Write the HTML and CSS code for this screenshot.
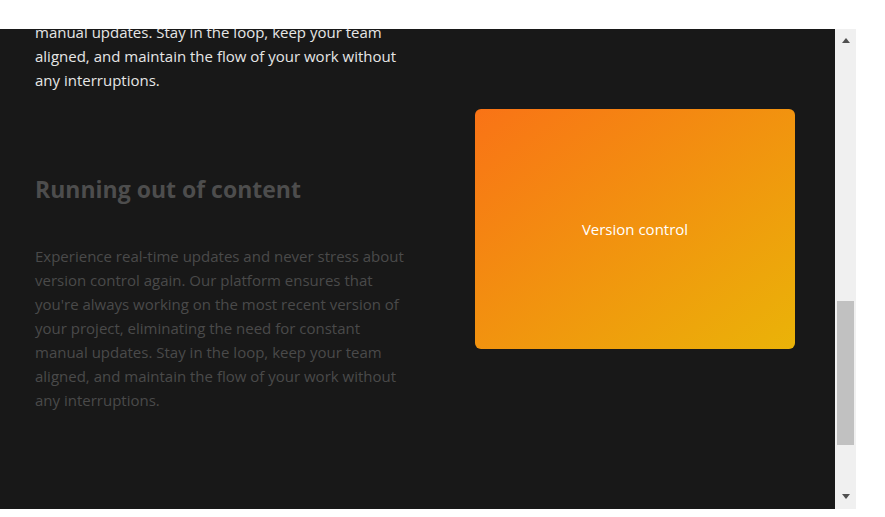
FILE: index.html
```html
<!DOCTYPE html>
<html lang="en">
<head>
<meta charset="utf-8">
<title>Features</title>
<link rel="stylesheet" href="styles.css">
</head>
<body>
<div class="frame">
  <div class="viewport">
    <div class="text-col">
      <section class="feature is-active">
        <h2 class="feature-title">Real-time updates</h2>
        <p class="feature-text">Experience real-time updates and never stress about version control again. Our platform ensures that you're always working on the most recent version of your project, eliminating the need for constant manual updates. Stay in the loop, keep your team aligned, and maintain the flow of your work without any interruptions.</p>
      </section>
      <section class="feature">
        <h2 class="feature-title">Running out of content</h2>
        <p class="feature-text">Experience real-time updates and never stress about version control again. Our platform ensures that you're always working on the most recent version of your project, eliminating the need for constant manual updates. Stay in the loop, keep your team aligned, and maintain the flow of your work without any interruptions.</p>
      </section>
    </div>
    <div class="visual-col">
      <div class="card">Version control</div>
    </div>
  </div>
  <div class="scrollbar">
    <div class="sb-button sb-up"><span class="arrow-up"></span></div>
    <div class="sb-track"><div class="sb-thumb"></div></div>
    <div class="sb-button sb-down"><span class="arrow-down"></span></div>
  </div>
</div>
</body>
</html>
```

FILE: styles.css
```css
html, body {
  margin: 0;
  padding: 0;
  background: #ffffff;
}

body {
  font-family: "Open Sans", "Noto Sans", sans-serif;
}

.frame {
  margin-top: 29px;
  display: flex;
  width: 856px;
  height: 480px;
}

.viewport {
  flex: 0 0 835px;
  height: 480px;
  overflow: hidden;
  background: #181818;
  display: flex;
  gap: 68px;
  padding: 0 40px 0 35px;
  box-sizing: border-box;
}

.text-col {
  flex: 0 0 372px;
  margin-top: -174px;
}

.feature + .feature {
  margin-top: 83px;
}

.feature-title {
  margin: 0 0 41px;
  font-size: 23px;
  line-height: 28px;
  font-weight: 700;
  color: #4d4d4d;
}

.feature-text {
  margin: 0;
  font-size: 15px;
  line-height: 24px;
  color: #4a4a4a;
}

.is-active .feature-title,
.is-active .feature-text {
  color: #e6e6e6;
}

.visual-col {
  flex: 0 0 320px;
  padding-top: 80px;
}

.card {
  width: 320px;
  height: 240px;
  border-radius: 6px;
  background: linear-gradient(to bottom right, #f97316, #eab308);
  display: flex;
  align-items: center;
  justify-content: center;
  color: #ffffff;
  font-size: 15px;
}

.scrollbar {
  flex: 0 0 21px;
  background: #f0f0f0;
  display: flex;
  flex-direction: column;
}

.sb-button {
  height: 17px;
  display: flex;
  justify-content: center;
}

.sb-up {
  align-items: flex-start;
  padding-top: 9px;
  box-sizing: border-box;
}

.sb-down {
  align-items: flex-end;
  padding-bottom: 10px;
  box-sizing: border-box;
}

.arrow-up,
.arrow-down {
  width: 0;
  height: 0;
  border-left: 4.5px solid transparent;
  border-right: 4.5px solid transparent;
}

.arrow-up {
  border-bottom: 5px solid #505050;
}

.arrow-down {
  border-top: 5px solid #505050;
}

.sb-track {
  flex: 1;
  padding: 0 2px;
}

.sb-thumb {
  margin-top: 255px;
  height: 144px;
  background: #c1c1c1;
}
```
